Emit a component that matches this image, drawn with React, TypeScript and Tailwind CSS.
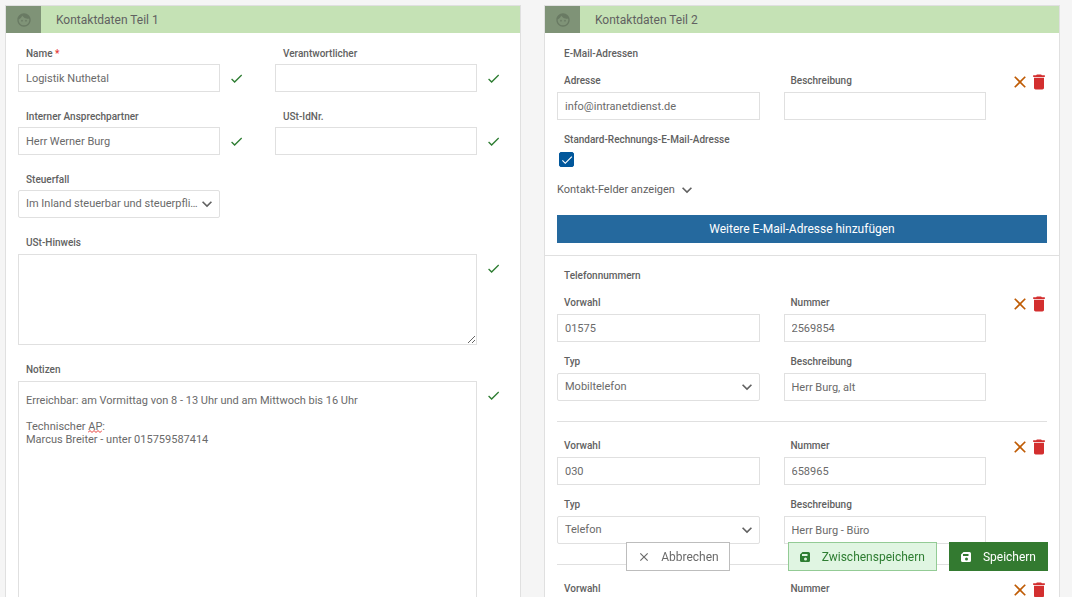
import { useState } from 'react';
import type { ReactNode } from 'react';
import { MdCheck, MdClose, MdDelete, MdExpandMore, MdFace } from 'react-icons/md';

const inputClass =
  'block h-7 w-full border border-[#e0e0e0] bg-white px-[7px] text-[11px] text-[#6a6a6a] outline-none focus:border-[#25699e]';

interface PanelProps {
  title: string;
  children: ReactNode;
}

function Panel({ title, children }: PanelProps) {
  return (
    <section className="min-w-0 flex-1 border border-[#e0e0e0] bg-white">
      <header className="flex h-[27px] items-center bg-[#c5e2b5]">
        <span className="flex h-full w-[35px] items-center justify-center bg-[#7f9377] text-[#697a63]">
          <MdFace size={16} />
        </span>
        <h2 className="pl-[15px] text-xs text-[#616161]">{title}</h2>
      </header>
      {children}
    </section>
  );
}

interface LabelProps {
  htmlFor: string;
  required?: boolean;
  children: ReactNode;
}

function Label({ htmlFor, required, children }: LabelProps) {
  return (
    <label htmlFor={htmlFor} className="mb-[3px] block pl-[7px] text-[10px] leading-4 font-medium text-[#616161]">
      {children}
      {required && <span className="text-[#e53935]"> *</span>}
    </label>
  );
}

function ValidMark() {
  return (
    <span className="flex h-7 w-[43px] shrink-0 items-center pl-[9px] text-[#2e7d32]">
      <MdCheck size={15} />
    </span>
  );
}

interface TextFieldProps {
  id: string;
  label: string;
  value?: string;
  required?: boolean;
}

function TextField({ id, label, value = '', required }: TextFieldProps) {
  return (
    <div className="min-w-0">
      <Label htmlFor={id} required={required}>{label}</Label>
      <input id={id} type="text" defaultValue={value} className={inputClass} />
    </div>
  );
}

interface SelectFieldProps {
  id: string;
  label: string;
  value: string;
  options: string[];
}

function SelectField({ id, label, value, options }: SelectFieldProps) {
  return (
    <div className="min-w-0">
      <Label htmlFor={id}>{label}</Label>
      <div className="grid items-center">
        <select
          id={id}
          defaultValue={value}
          className="col-start-1 row-start-1 h-7 w-full appearance-none truncate rounded-xs border border-[#e0e0e0] bg-white pt-px pr-5 pl-[7px] text-[11px] text-[#6a6a6a] outline-none"
        >
          {options.map((option) => (
            <option key={option}>{option}</option>
          ))}
        </select>
        <MdExpandMore
          size={20}
          className="pointer-events-none col-start-1 row-start-1 mr-[3px] justify-self-end text-[#616161]"
        />
      </div>
    </div>
  );
}

function RowActions() {
  return (
    <div className="flex h-[17px] items-center">
      <button type="button" aria-label="Leeren" className="flex w-[19px] justify-center text-[#bf5b04]">
        <MdClose size={20} className="shrink-0" />
      </button>
      <button type="button" aria-label="Löschen" className="flex w-[19px] justify-center text-[#d32f2f]">
        <MdDelete size={20} className="shrink-0" />
      </button>
    </div>
  );
}

interface Phone {
  id: string;
  prefix: string;
  number: string;
  type: string;
  description: string;
}

const phones: Phone[] = [
  { id: 'tel1', prefix: '01575', number: '2569854', type: 'Mobiltelefon', description: 'Herr Burg, alt' },
  { id: 'tel2', prefix: '030', number: '658965', type: 'Telefon', description: 'Herr Burg - Büro' },
  { id: 'tel3', prefix: '', number: '', type: 'Telefon', description: '' },
];

function PhoneRow({ phone }: { phone: Phone }) {
  return (
    <div className="grid grid-cols-[1fr_1fr_37px] gap-x-6 gap-y-3 border-b border-[#e0e0e0] pb-5">
      <TextField id={`${phone.id}-vorwahl`} label="Vorwahl" value={phone.prefix} />
      <TextField id={`${phone.id}-nummer`} label="Nummer" value={phone.number} />
      <RowActions />
      <SelectField id={`${phone.id}-typ`} label="Typ" value={phone.type} options={['Telefon', 'Mobiltelefon', 'Fax']} />
      <TextField id={`${phone.id}-beschreibung`} label="Beschreibung" value={phone.description} />
    </div>
  );
}

function SaveIcon() {
  return (
    <svg viewBox="0 0 20 20" className="h-[10px] w-[10px] shrink-0" fill="currentColor" aria-hidden="true">
      <path
        fillRule="evenodd"
        d="M5 0h12a3 3 0 0 1 3 3v14a3 3 0 0 1-3 3H3a3 3 0 0 1-3-3V5zM4 4v4h11V4zM11 11a3 3 0 1 0 0 6 3 3 0 0 0 0-6z"
      />
    </svg>
  );
}

const notes = `Erreichbar: am Vormittag von 8 - 13 Uhr und am Mittwoch bis 16 Uhr

Technischer AP:
Marcus Breiter - unter 015759587414`;

export default function App() {
  const [standard, setStandard] = useState(true);

  return (
    <form className="min-h-screen bg-[#f5f5f5] pt-[5px] pr-3 pb-16 pl-[5px] font-['Roboto',sans-serif]">
      <div className="flex gap-[23px]">
        <Panel title="Kontaktdaten Teil 1">
          <div className="flex flex-col gap-4 pt-3 [&_label]:mb-0.5 [&_label]:pt-px [&_label]:pl-2">
            <div className="grid grid-cols-2 gap-y-4">
              <div className="flex items-end pl-3">
                <div className="min-w-0 flex-1">
                  <TextField id="name" label="Name" value="Logistik Nuthetal" required />
                </div>
                <ValidMark />
              </div>
              <div className="flex items-end pl-3">
                <div className="min-w-0 flex-1">
                  <TextField id="verantwortlicher" label="Verantwortlicher" />
                </div>
                <ValidMark />
              </div>
              <div className="flex items-end pl-3">
                <div className="min-w-0 flex-1">
                  <TextField id="ansprechpartner" label="Interner Ansprechpartner" value="Herr Werner Burg" />
                </div>
                <ValidMark />
              </div>
              <div className="flex items-end pl-3">
                <div className="min-w-0 flex-1">
                  <TextField id="ustid" label="USt-IdNr." />
                </div>
                <ValidMark />
              </div>
              <div className="pr-[43px] pl-3">
                <SelectField
                  id="steuerfall"
                  label="Steuerfall"
                  value="Im Inland steuerbar und steuerpflichtig"
                  options={['Im Inland steuerbar und steuerpflichtig', 'Im Inland nicht steuerbar']}
                />
              </div>
            </div>

            <div className="pl-3">
              <Label htmlFor="hinweis">USt-Hinweis</Label>
              <div className="flex pt-px">
                <textarea
                  id="hinweis"
                  className="block h-[91px] min-w-0 flex-1 border border-[#e0e0e0] px-[7px] py-3 text-[11px] leading-[13px] text-[#6a6a6a] outline-none"
                />
                <ValidMark />
              </div>
            </div>

            <div className="pl-3">
              <Label htmlFor="notizen">Notizen</Label>
              <div className="flex pt-px">
                <div className="relative min-w-0 flex-1">
                  <textarea
                    id="notizen"
                    defaultValue={notes}
                    spellCheck={false}
                    className="block h-72 w-full border border-[#e0e0e0] px-[7px] py-3 text-[11px] leading-[13px] text-[#6a6a6a] outline-none"
                  />
                  {/* spelling mark below "AP" */}
                  <svg
                    className="pointer-events-none absolute top-[49px] left-[70px] h-[3px] w-[14px]"
                    viewBox="0 0 14 3"
                    fill="none"
                    stroke="#e53935"
                    aria-hidden="true"
                  >
                    <path d="M0 2.500 2 .5l2 2 2-2 2 2 2-2 2 2 2-2" />
                  </svg>
                </div>
                <ValidMark />
              </div>
            </div>
          </div>
        </Panel>

        <Panel title="Kontaktdaten Teil 2">
          <div className="border-b border-[#e0e0e0] px-3 pt-[13px] pb-3">
            <h3 className="mb-[11px] pl-[7px] text-[10px] leading-4 font-medium text-[#616161]">E-Mail-Adressen</h3>
            <div className="grid grid-cols-[1fr_1fr_37px] gap-x-6">
              <TextField id="adresse" label="Adresse" value="info@intranetdienst.de" />
              <TextField id="adresse-beschreibung" label="Beschreibung" />
              <RowActions />
            </div>

            <div className="mt-3">
              <Label htmlFor="standard">Standard-Rechnungs-E-Mail-Adresse</Label>
              <div className="grid w-[19px] place-items-center pt-px">
                <input
                  id="standard"
                  type="checkbox"
                  checked={standard}
                  onChange={(e) => setStandard(e.target.checked)}
                  className="col-start-1 row-start-1 size-[15px] appearance-none rounded-xs border border-[#01579b] bg-white checked:bg-[#01579b]"
                />
                {standard && (
                  <MdCheck size={14} className="pointer-events-none col-start-1 row-start-1 text-white" />
                )}
              </div>
            </div>

            <button type="button" className="mt-[15px] flex h-4 items-center gap-0.5 text-[11px] text-[#616161]">
              Kontakt-Felder anzeigen
              <MdExpandMore size={20} />
            </button>

            <button type="button" className="mt-[17px] h-7 w-full bg-[#25699e] text-xs text-white">
              Weitere E-Mail-Adresse hinzufügen
            </button>
          </div>

          <div className="px-3 pt-3">
            <h3 className="mb-[11px] pl-[7px] text-[10px] leading-4 font-medium text-[#616161]">Telefonnummern</h3>
            <div className="flex flex-col gap-4">
              {phones.map((phone) => (
                <PhoneRow key={phone.id} phone={phone} />
              ))}
            </div>
          </div>
        </Panel>
      </div>

      <div className="fixed right-6 bottom-[26px] flex gap-3 text-xs">
        <button
          type="button"
          className="mr-[46px] flex h-[29px] items-center gap-2.5 border border-[#bdbdbd] bg-white px-2.5 text-[#6a6a6a]"
        >
          <MdClose size={14} />
          Abbrechen
        </button>
        <button
          type="button"
          className="flex h-[29px] items-center gap-3 border border-[#93cb95] bg-[#e0f5e2] px-[11px] text-[#2e7d32]"
        >
          <SaveIcon />
          Zwischenspeichern
        </button>
        <button type="submit" className="flex h-[29px] items-center gap-3 bg-[#337a30] px-3 text-white">
          <SaveIcon />
          Speichern
        </button>
      </div>
    </form>
  );
}
